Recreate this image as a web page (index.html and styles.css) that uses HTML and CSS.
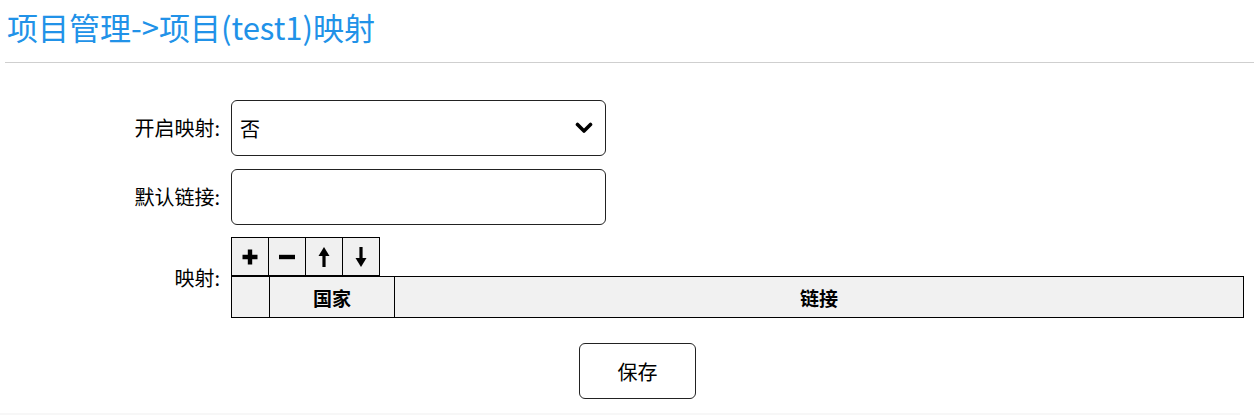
FILE: index.html
```html
<!DOCTYPE html>
<html lang="zh">
<head>
<meta charset="utf-8">
<link rel="stylesheet" href="styles.css">
</head>
<body>
<div class="page">
  <h2 class="title">项目管理-&gt;项目(test1)映射</h2>
  <div class="rule"></div>
  <form class="form">
    <div class="row">
      <label class="label">开启映射:</label>
      <div class="select">
        <span>否</span>
        <svg class="chev" width="18" height="12" viewBox="0 0 18 12"><path d="M2.5 2.5 L9 9 L15.5 2.5" fill="none" stroke="#000" stroke-width="3.6" stroke-linecap="round" stroke-linejoin="round"/></svg>
      </div>
    </div>
    <div class="row row2">
      <label class="label">默认链接:</label>
      <div class="input"></div>
    </div>
    <div class="row row3">
      <label class="label">映射:</label>
      <div class="grid">
        <div class="tools">
          <div class="tool"><svg width="18" height="18" viewBox="0 0 18 18"><path d="M9 1.5 V16.5 M1.5 9 H16.5" stroke="#000" stroke-width="4.4"/></svg></div>
          <div class="tool"><svg width="18" height="18" viewBox="0 0 18 18"><path d="M1 9 H17" stroke="#000" stroke-width="4.4"/></svg></div>
          <div class="tool"><svg width="12" height="22" viewBox="0 0 12 22"><path d="M6 21 V7" stroke="#000" stroke-width="3.2"/><path d="M0.5 10 L6 1 L11.5 10 Z" fill="#000"/></svg></div>
          <div class="tool"><svg width="12" height="22" viewBox="0 0 12 22"><path d="M6 1 V15" stroke="#000" stroke-width="3.2"/><path d="M0.5 12 L6 21 L11.5 12 Z" fill="#000"/></svg></div>
        </div>
        <div class="thead">
          <div class="th c1"></div>
          <div class="th c2">国家</div>
          <div class="th c3">链接</div>
        </div>
      </div>
    </div>
    <div class="actions">
      <div class="btn">保存</div>
    </div>
  </form>
  <div class="foot"></div>
</div>
</body>
</html>
```

FILE: styles.css
```css
html, body {
  margin: 0;
  padding: 0;
  background: #fff;
}
body {
  font-family: "Noto Sans CJK SC", "Noto Sans", sans-serif;
  color: #000;
  font-size: 20px;
}
.page {
  width: 1255px;
  height: 415px;
  overflow: hidden;
  position: relative;
}
.title {
  margin: 0;
  padding: 7px 0 0 7px;
  height: 50px;
  box-sizing: border-box;
  font-size: 31px;
  font-weight: 400;
  line-height: 40px;
  color: #2192e8;
}
.rule {
  margin: 12px 1px 0 5px;
  height: 1px;
  background: #cfcfcf;
}
.form {
  padding-top: 37px;
}
.row {
  display: flex;
  align-items: center;
}
.row2 {
  margin-top: 13px;
}
.row3 {
  margin-top: 12px;
}
.label {
  width: 231px;
  text-align: right;
  padding-right: 11px;
  box-sizing: border-box;
  font-size: 20px;
  line-height: 24px;
}
.select, .input {
  width: 375px;
  height: 56px;
  box-sizing: border-box;
  border: 1px solid #222;
  border-radius: 6px;
}
.select {
  display: flex;
  align-items: center;
  justify-content: space-between;
  padding: 0 12px 0 8px;
  font-size: 20px;
}
.chev {
  display: block;
}
.grid {
  display: flex;
  flex-direction: column;
}
.tools {
  display: flex;
}
.tool {
  width: 37px;
  height: 39px;
  box-sizing: border-box;
  border: 1px solid #000;
  border-right: none;
  background: #f0f0f0;
  display: flex;
  align-items: center;
  justify-content: center;
}
.tool:last-child {
  width: 38px;
  border-right: 1px solid #000;
}
.thead {
  display: flex;
  width: 1013px;
  height: 42px;
  box-sizing: border-box;
  border: 1px solid #000;
  background: #f1f1f1;
}
.th {
  display: flex;
  align-items: center;
  justify-content: center;
  font-weight: 700;
  font-size: 19px;
}
.c1 {
  width: 37px;
  border-right: 1px solid #000;
}
.c2 {
  width: 124px;
  border-right: 1px solid #000;
}
.c3 {
  flex: 1;
}
.actions {
  display: flex;
  padding-left: 579px;
  margin-top: 25px;
}
.btn {
  width: 117px;
  height: 56px;
  box-sizing: border-box;
  border: 1px solid #222;
  border-radius: 6px;
  display: flex;
  align-items: center;
  justify-content: center;
  font-size: 20px;
}
.foot {
  margin-top: 14px;
  width: 1240px;
  height: 4px;
  background: #f7f7f7;
}
```
